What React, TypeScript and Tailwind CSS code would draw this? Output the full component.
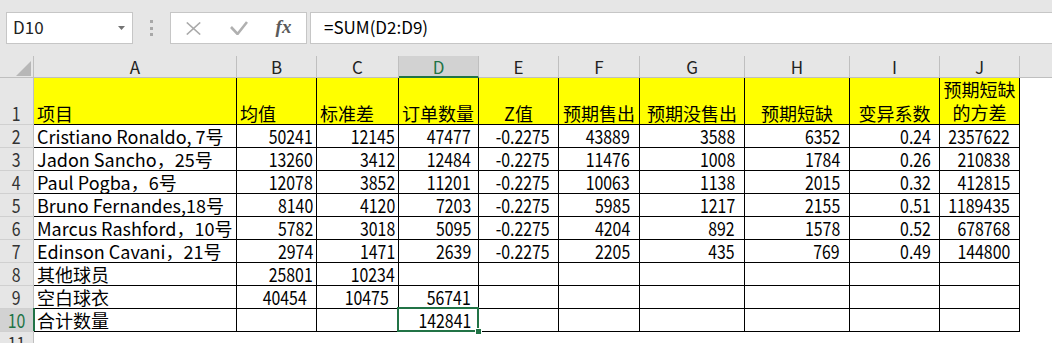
import React from 'react';

const CJK = "font-['Noto_Sans_CJK_SC',sans-serif]";
const GREEN_BG = 'bg-[#217346]';

const letters = ['A', 'B', 'C', 'D', 'E', 'F', 'G', 'H', 'I', 'J'];

const rows: string[][] = [
  ['Cristiano Ronaldo, 7号', '50241', '12145', '47477', '-0.2275', '43889', '3588', '6352', '0.24', '2357622'],
  ['Jadon Sancho，25号', '13260', '3412', '12484', '-0.2275', '11476', '1008', '1784', '0.26', '210838'],
  ['Paul Pogba，6号', '12078', '3852', '11201', '-0.2275', '10063', '1138', '2015', '0.32', '412815'],
  ['Bruno Fernandes,18号', '8140', '4120', '7203', '-0.2275', '5985', '1217', '2155', '0.51', '1189435'],
  ['Marcus Rashford，10号', '5782', '3018', '5095', '-0.2275', '4204', '892', '1578', '0.52', '678768'],
  ['Edinson Cavani，21号', '2974', '1471', '2639', '-0.2275', '2205', '435', '769', '0.49', '144800'],
  ['其他球员', '25801', '10234', '', '', '', '', '', '', ''],
  ['空白球衣', '40454', '10475', '56741', '', '', '', '', '', ''],
  ['合计数量', '', '', '142841', '', '', '', '', '', ''],
];

const pads = ['', 'pr-[3px]', 'pr-[3px]', 'pr-[7px]', 'pr-[8px]', 'pr-[9px]', 'pr-[9px]', 'pr-[9px]', 'pr-[8px]', 'pr-[9px]'];

const headers = ['项目', '均值', '标准差', '订单数量', 'Z值', '预期售出', '预期没售出', '预期短缺', '变异系数'];

function RowNum({ n }: { n: number }) {
  const sel = n === 10;
  return (
    <div
      className={`relative flex items-end justify-center pb-[1px] border-r border-b border-r-[#bfbfbf] border-b-[#d0d0d0] leading-[20px] text-[19px] ${CJK} ${
        sel ? 'bg-[#d2d2d2] text-[#217346]' : 'bg-[#e6e6e6] text-[#333333]'
      }`}
    >
      <span className="inline-block origin-center scale-x-[0.835]">{n}</span>
      {sel && <div className={`absolute top-[-1px] bottom-0 right-[-2px] w-[2px] z-10 ${GREEN_BG}`} />}
    </div>
  );
}

function Toolbar() {
  return (
    <div className="h-[56px] bg-[#e6e6e6] flex items-start pt-[12px] pl-[6px]">
      <div className={`w-[127px] h-[32px] bg-white border border-[#c6c6c6] flex items-center justify-between pl-[6px] pr-[7px] pb-[2px] text-[17px] leading-[20px] text-[#222222] ${CJK}`}>
        <span>D10</span>
        <svg width="7" height="4" viewBox="0 0 7 4" className="mt-[2px]">
          <polygon points="0,0 7,0 3.5,4" fill="#737373" />
        </svg>
      </div>
      <div className="w-[37px] h-[32px] flex flex-col items-center justify-center gap-[3.5px]">
        <div className="w-[3px] h-[3px] bg-[#a8a8a8]" />
        <div className="w-[3px] h-[3px] bg-[#a8a8a8]" />
        <div className="w-[3px] h-[3px] bg-[#a8a8a8]" />
      </div>
      <div className="w-[137px] h-[32px] bg-white border border-[#c6c6c6] flex items-center">
        <div className="w-[45px] flex items-center justify-center">
          <svg width="15" height="13" viewBox="0 0 15 13">
            <line x1="0.8" y1="0.5" x2="14.2" y2="12.5" stroke="#a9a9a9" strokeWidth="1.6" />
            <line x1="14.2" y1="0.5" x2="0.8" y2="12.5" stroke="#a9a9a9" strokeWidth="1.6" />
          </svg>
        </div>
        <div className="w-[45px] flex items-center justify-center">
          <svg width="18" height="14" viewBox="0 0 18 14">
            <polyline points="1,6 7.5,13 17,1" fill="none" stroke="#b0b0b0" strokeWidth="2.6" />
          </svg>
        </div>
        <div className="w-[45px] flex items-center justify-center">
          <span className="font-['Liberation_Serif',serif] italic font-semibold text-[19px] leading-[20px] text-[#5a5a5a] pb-[2px]">
            fx
          </span>
        </div>
      </div>
      <div className={`ml-[3px] flex-1 h-[32px] bg-white border border-r-0 border-[#c6c6c6] flex items-center pl-[13px] pb-[2px] text-[17px] leading-[20px] text-black ${CJK}`}>
        =SUM(D2:D9)
      </div>
    </div>
  );
}

export default function App() {
  return (
    <div className="w-[1052px] h-[343px] overflow-hidden bg-white text-black">
      <Toolbar />
      <div className="grid grid-cols-[34px_203px_80px_82px_80px_80px_81px_105px_105px_90px_80px_1fr] grid-rows-[22px_47px_23px_23px_23px_23px_23px_23px_23px_23px_23px_23px]">
        {/* column header row */}
        <div className="relative bg-[#e6e6e6] border-r border-b border-[#bfbfbf]">
          <svg width="15" height="15" viewBox="0 0 15 15" className="absolute right-[2px] bottom-[1px]">
            <polygon points="15,0 15,15 0,15" fill="#b7b7b7" />
          </svg>
        </div>
        {letters.map((l) => (
          <div
            key={l}
            className={`flex items-start justify-center pt-[1px] border-r border-r-[#bfbfbf] text-[17px] leading-[20px] ${CJK} ${
              l === 'D'
                ? 'bg-[#d2d2d2] text-[#217346] border-b-2 border-b-[#217346]'
                : 'bg-[#e6e6e6] text-[#222222] border-b border-b-[#bfbfbf]'
            }`}
          >
            {l}
          </div>
        ))}
        <div className="bg-[#e6e6e6] border-b border-[#bfbfbf]" />

        {/* row 1 */}
        <RowNum n={1} />
        {headers.map((h, i) => (
          <div
            key={h}
            className={`bg-[#ffff00] border-r border-b border-black flex items-end pb-[1px] text-[18px] leading-[20px] whitespace-nowrap ${CJK} ${
              i < 4 ? 'pl-[3px] justify-start' : 'justify-center'
            }`}
          >
            {h}
          </div>
        ))}
        <div className={`bg-[#ffff00] border-r border-b border-black flex items-end justify-center text-center text-[18px] leading-[23px] ${CJK}`}>
          <span>
            预期短缺
            <br />
            的方差
          </span>
        </div>
        <div />

        {/* data rows */}
        {rows.map((row, ri) => {
          const n = ri + 2;
          return (
            <React.Fragment key={n}>
              <RowNum n={n} />
              <div className={`border-r border-b border-black flex items-end pl-[3px] pb-[1px] text-[18px] leading-[20px] whitespace-nowrap ${CJK}`}>
                {row[0]}
              </div>
              {row.slice(1).map((v, ci) => {
                const col = ci + 1;
                const isD10 = n === 10 && col === 3;
                const pad = n === 9 && (col === 1 || col === 2) ? 'pr-[9px]' : pads[col];
                return (
                  <div
                    key={col}
                    className={`relative border-r border-b border-black flex items-end justify-end pb-[1px] text-[19px] leading-[20px] whitespace-nowrap ${CJK} ${pad}`}
                  >
                    <span className="inline-block origin-right scale-x-[0.835]">{v}</span>
                    {isD10 && (
                      <>
                        <div className="absolute top-[-2px] left-[-2px] right-[-1px] bottom-[-1px] border-2 border-[#217346] z-10" />
                        <div className={`absolute right-[-4px] bottom-[-4px] w-[7px] h-[7px] border border-white z-20 ${GREEN_BG}`} />
                      </>
                    )}
                  </div>
                );
              })}
              <div />
            </React.Fragment>
          );
        })}

        {/* row 11 */}
        <RowNum n={11} />
      </div>
    </div>
  );
}
